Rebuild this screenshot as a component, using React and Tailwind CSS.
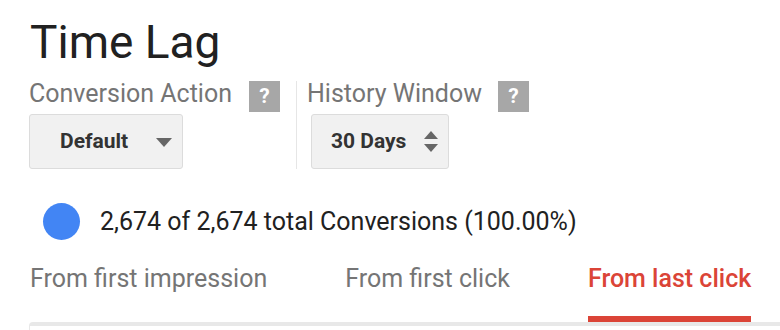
import React from 'react';

const TABS = [
  { label: 'From first impression', active: false },
  { label: 'From first click', active: false },
  { label: 'From last click', active: true },
];

function HelpBox() {
  return (
    <span className="w-[31px] h-[31px] bg-[#a7a7a7] text-white font-bold text-[21px] leading-none flex items-center justify-center shrink-0">
      ?
    </span>
  );
}

export default function App() {
  return (
    <div className="w-[780px] h-[330px] bg-white overflow-hidden font-['Roboto',sans-serif] pt-[19px]">
      <h1 className="pl-[30px] text-[46px] leading-none text-[#212121] font-normal">Time Lag</h1>

      <div className="flex mt-[16px] pl-[29px]">
        {/* Conversion action */}
        <div className="flex flex-col">
          <div className="flex items-start gap-[17px]">
            <span className="text-[25px] leading-none text-[#757575]">Conversion Action</span>
            <HelpBox />
          </div>
          <button className="mt-[2px] w-[154px] h-[55px] bg-[#f1f1f1] border border-[#dcdcdc] rounded-[3px] flex items-center pl-[30px] pr-[10px] justify-between">
            <span className="text-[21px] font-bold text-[#333]">Default</span>
            <svg width="16" height="9" viewBox="0 0 16 9" className="mt-[1px]">
              <path d="M0 0 L16 0 L8 9 Z" fill="#666" />
            </svg>
          </button>
        </div>

        <div className="w-px bg-[#e6e6e6] ml-[16px] mr-[10px] h-[88px]" />

        {/* History window */}
        <div className="flex flex-col">
          <div className="flex items-start gap-[16px]">
            <span className="text-[25px] leading-none text-[#757575]">History Window</span>
            <HelpBox />
          </div>
          <button className="mt-[2px] ml-[4px] w-[138px] h-[55px] bg-[#f1f1f1] border border-[#dcdcdc] rounded-[3px] flex items-center pl-[19px] pr-[10px] justify-between">
            <span className="text-[21px] font-bold text-[#333]">30 Days</span>
            <svg width="14" height="21" viewBox="0 0 14 21">
              <path d="M0 8 L14 8 L7 0 Z" fill="#666" />
              <path d="M0 13 L14 13 L7 21 Z" fill="#666" />
            </svg>
          </button>
        </div>
      </div>

      <div className="flex items-center gap-[20px] pl-[43px] mt-[34px]">
        <span className="w-[37px] h-[37px] rounded-full bg-[#4285f4] shrink-0" />
        <span className="text-[25px] leading-none text-[#212121]">2,674 of 2,674 total Conversions (100.00%)</span>
      </div>

      <div className="flex gap-[78px] pl-[30px] mt-[26px]">
        {TABS.map(t => (
          <div key={t.label} className="flex flex-col">
            <span className={`text-[25px] leading-none whitespace-nowrap ${t.active ? 'text-[#db4437] font-medium' : 'text-[#757575]'}`}>
              {t.label}
            </span>
            <div className={`h-[6px] mt-[25px] ${t.active ? 'bg-[#db4437]' : 'bg-transparent'}`} />
          </div>
        ))}
      </div>

      <div className="ml-[29px] h-[20px] border-t-4 border-l border-[#e8e8e8] rounded-tl-[4px]" />
    </div>
  );
}
